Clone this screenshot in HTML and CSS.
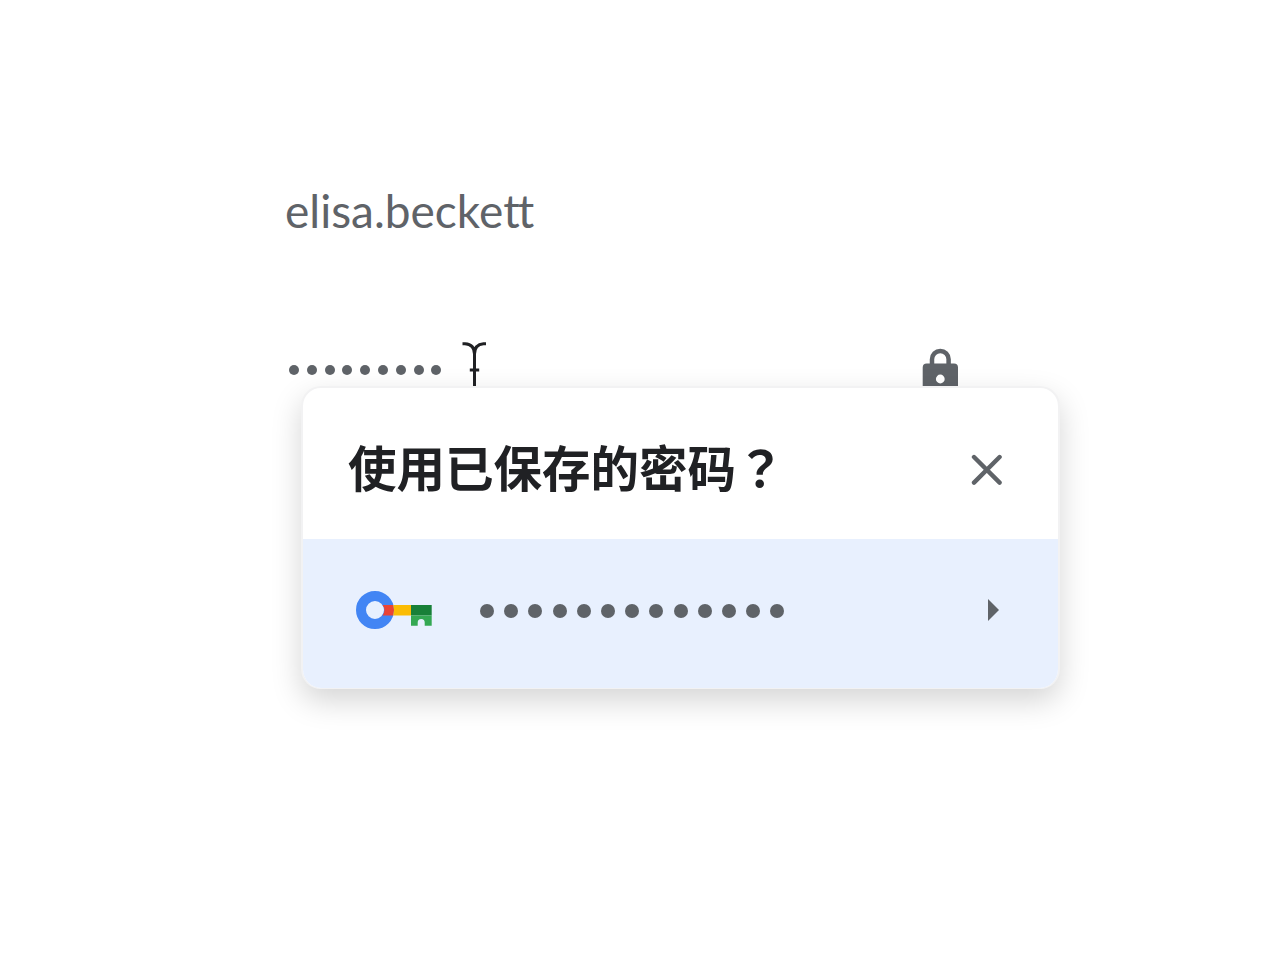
FILE: index.html
```html
<!DOCTYPE html>
<html lang="zh-CN">
<head>
    <meta charset="UTF-8">
    <meta name="viewport" content="width=device-width, initial-scale=1.0">
    <title>使用已保存的密码？</title>
    <link rel="stylesheet" href="styles.css">
</head>
<body>

    <main class="login">

        <p class="usuario">elisa.becke<span class="tt">t</span>t</p>

        <div class="senha">
            <div class="pontos">
                <i></i><i></i><i></i><i></i><i></i><i></i><i></i><i></i><i></i>
            </div>
            <svg class="cursor" width="24" height="54" viewBox="0 0 24 54">
                <path d="M.5 1.7H3Q12.500 2.400 12.500 12Q12.500 2.400 21.500 1.700H24M12.500 9v36M7.800 28h9.400" />
            </svg>
            <svg class="cadeado" width="36" height="48" viewBox="0 0 36 48">
                <path class="arco" d="M10 17v-5.700a8.300 8.300 0 0 1 16.600 0V17" />
                <path class="corpo" fill-rule="evenodd" d="M4.700 15.500h27.300a4 4 0 0 1 4 4V48H.7V19.500a4 4 0 0 1 4-4zM18.300 26.600a4.400 4.400 0 1 0 0 8.800a4.400 4.400 0 1 0 0-8.800z" />
            </svg>
        </div>

        <section class="popup">
            <header class="topo">
                <h1>使用已保存的密码<span class="pergunta" lang="ja">？</span></h1>
                <svg class="fechar" width="32" height="32" viewBox="0 0 32 32">
                    <path d="M3 3l25.600 25.600M28.600 3L3 28.600" />
                </svg>
            </header>
            <div class="opcao">
                <svg class="chave" width="76" height="38" viewBox="0 0 76 38">
                    <circle cx="19" cy="19" r="14" fill="none" stroke="#4285f4" stroke-width="10" />
                    <path fill="#ea4335" d="M26.600 14h10.700a19 19 0 0 1 0 10.400h-10.700a9 9 0 0 0 0-10.400z" />
                    <path fill="#fbbc04" d="M37.300 14H55v10.400H37.300a19 19 0 0 0 0-10.400z" />
                    <path fill="#188038" d="M55 14h20.700v10.400H55z" />
                    <path fill="#34a853" d="M55 24.400h20.700v10.300h-7v-3.300a3.500 3.500 0 0 0-7 0v3.300H55z" />
                </svg>
                <div class="pontos grandes">
                    <i></i><i></i><i></i><i></i><i></i><i></i><i></i><i></i><i></i><i></i><i></i><i></i><i></i>
                </div>
                <svg class="seta" width="12" height="22" viewBox="0 0 12 22">
                    <path d="M0 0l11 11L0 22z" />
                </svg>
            </div>
        </section>

    </main>

</body>
</html>
```

FILE: styles.css
```css
*{
    box-sizing: border-box;
}

body{
    margin: 0;
    background-color: white;
    font-family: "Lato", "Noto Sans CJK SC", sans-serif;
}

.login{
    position: relative;
    width: 1280px;
    height: 960px;
    padding: 181px 322px 0 285px;
    overflow: hidden;
}

.usuario{
    margin: 0;
    height: 60px;
    line-height: 60px;
    font-size: 46px;
    color: #5f6368;
    white-space: nowrap;
}

.tt{
    letter-spacing: -2px;
}

.senha{
    display: flex;
    align-items: flex-start;
    height: 56px;
    margin-top: 101px;
    padding-left: 4px;
}

.pontos{
    display: flex;
    gap: 7.8px;
    margin-top: 23px;
}

.pontos i{
    width: 10px;
    height: 10px;
    border-radius: 50%;
    background-color: #5f6368;
}

.cursor{
    margin-left: 20.5px;
    fill: none;
    stroke: #202124;
    stroke-width: 3;
}

.cadeado{
    margin-top: 6px;
    margin-left: auto;
    fill: #5f6368;
}

.arco{
    fill: none;
    stroke: #5f6368;
    stroke-width: 4.5;
}

/* janela por cima do formulario */
.popup{
    position: absolute;
    left: 301px;
    top: 386px;
    width: 759px;
    height: 303px;
    border: 2px solid #f2f2f3;
    border-bottom-width: 1px;
    border-radius: 20px;
    overflow: hidden;
    background-color: white;
    box-shadow: 0 12px 30px rgba(0, 0, 0, 0.17);
}

.topo{
    display: flex;
    align-items: center;
    justify-content: space-between;
    height: 151px;
    padding: 12px 55px 0 45px;
}

h1{
    margin: -8px 0 0;
    font-family: "Noto Sans CJK SC", sans-serif;
    font-size: 48.5px;
    line-height: 70px;
    font-weight: bold;
    color: #202124;
}

.pergunta{
    font-family: "Noto Sans CJK JP", sans-serif;
}

.fechar{
    fill: none;
    stroke: #5f6368;
    stroke-width: 4.4;
    stroke-linecap: round;
}

.opcao{
    display: flex;
    align-items: center;
    height: 149px;
    padding: 0 58px 8px 53px;
    background-color: #e8f0fe;
}

.grandes{
    gap: 10.2px;
    margin: 2px 0 0 48px;
}

.grandes i{
    width: 14px;
    height: 14px;
}

.seta{
    margin-left: auto;
    fill: #5f6368;
}
```
